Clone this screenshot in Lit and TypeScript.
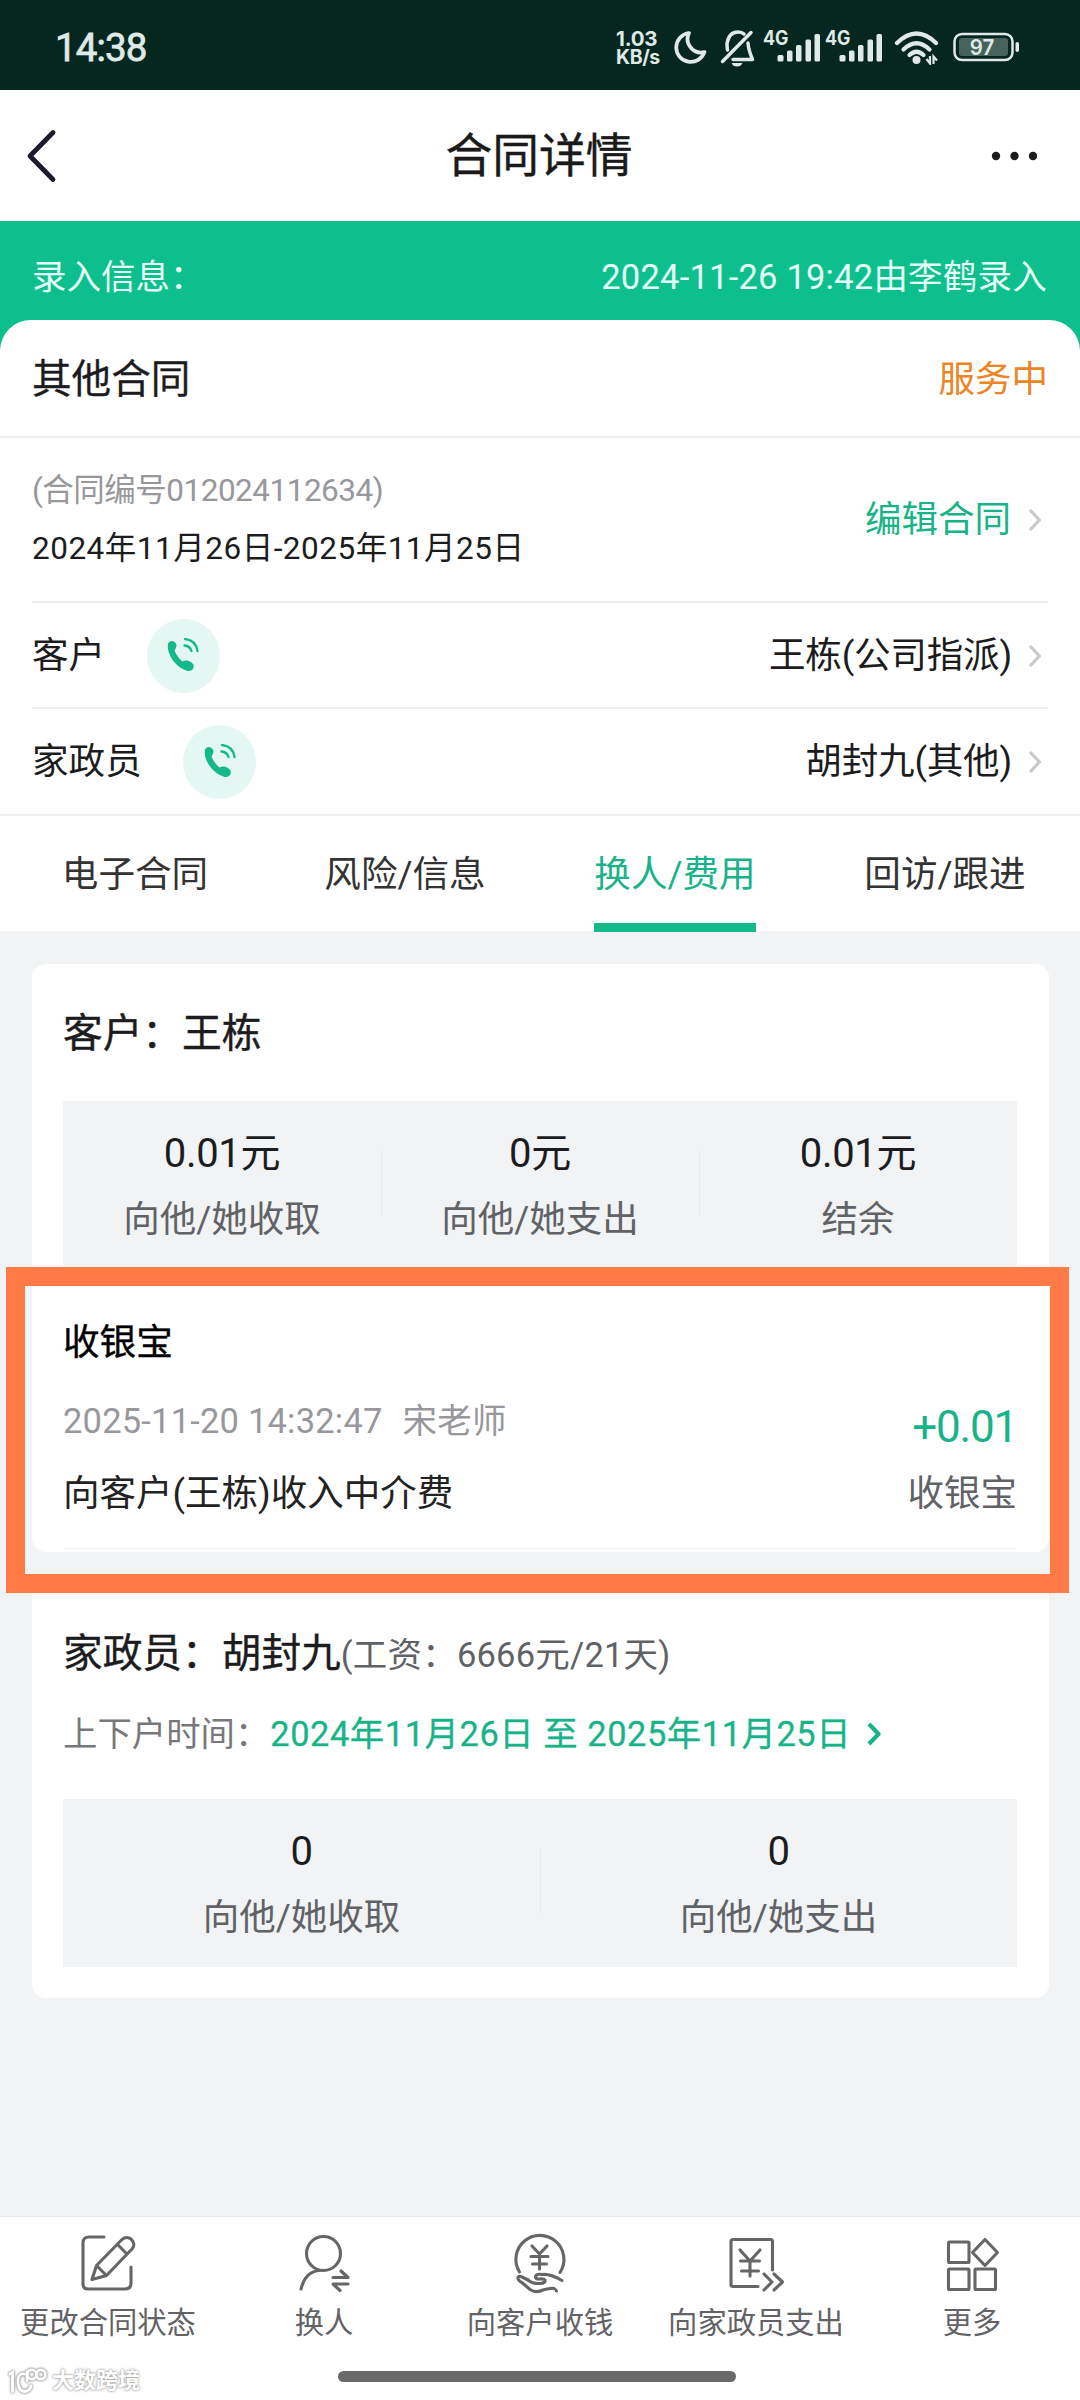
import { LitElement, html, css, svg } from "lit";
import { customElement, property } from "lit/decorators.js";

const chevronRight = html`<svg class="chev" viewBox="0 0 14 24" width="14" height="24">
  <path class="stroke" d="M2 2 L11.5 12 L2 22" fill="none" stroke="currentColor" stroke-width="3.2" stroke-linejoin="round" />
</svg>`;

const yuan = svg`<path d="M-7.5 -10 L0 -2 L7.5 -10 M0 -2 V13 M-8.5 0.5 H8.5 M-7 8 H7" />`;

const icons: Record<string, unknown> = {
  edit: svg`
    <path d="M28 7 H13 Q7 7 7 13 V54 Q7 59 12 59 H49 Q55 59 55 53 V37" />
    <path d="M16 49.500 L20.500 35.500 L46 9.500 Q51 5.500 55.500 9.500 Q60 14.500 56 19 L30.500 45.500 Z M20.500 35.500 L30.500 45.500 M42.500 15.500 L50 23" />`,
  swap: svg`
    <circle cx="31.500" cy="23.500" r="17" />
    <path d="M9 59 Q13.500 41 28 40.500" />
    <path d="M41 47.500 H56 L49 41 M56 54 H41 L48 60.500" />`,
  collect: svg`
    <path d="M11.500 42 A24 24 0 1 1 52 42.500" />
    <g transform="translate(31.500 26)">${yuan}</g>
    <path d="M20 50 L14 47 Q9.500 45 10 48.500 Q10.500 51 14.500 53 L22 59.500 Q28 63.500 35 60 Q44 57.500 46 58.500 Q48.500 60 48.500 61" />
    <path d="M20 50 Q25 54 32 53.500 Q38 53 37 50 Q36 48.500 31 49 Q27 49 27.500 46.500 Q28.500 43.500 34 44.500 Q42 43.500 54 50.500" />`,
  pay: svg`
    <path d="M48.500 40 V11.500 Q48.500 9.500 46.500 9.500 H9 Q7 9.500 7 11.500 V54.500 Q7 56.500 9 56.500 H34" />
    <path d="M16 20 L26 31 L36 20 M26 31 V46 M16.500 31 H35.500 M17.500 41 H34.500" />
    <path d="M40 44 L48 52 L40 60 M50 44 L58.500 52 L50 60" />`,
  more: svg`
    <rect x="8.500" y="12" width="20.500" height="20.500" rx="1" />
    <rect x="8.500" y="39" width="20.500" height="20.500" rx="1" />
    <rect x="35" y="39" width="20.500" height="20.500" rx="1" />
    <path d="M45 9.500 L57.500 22.500 L45 35.500 L32.500 22.500 Z" />`,
};

const signal = html`<svg class="signal" viewBox="0 -8 58 42" width="58" height="42">
  <text x="0" y="17" font-size="19.500" font-weight="700" textLength="25.5" lengthAdjust="spacingAndGlyphs" fill="currentColor">4G</text>
  <g fill="currentColor">
    <rect x="14.500" y="27" width="6" height="6.500" rx="1.500" />
    <rect x="24" y="22.500" width="5.500" height="11" rx="1.500" />
    <rect x="33" y="17" width="5.500" height="16.500" rx="1.500" />
    <rect x="42.500" y="11.500" width="5.500" height="22" rx="1.500" />
    <rect x="51.500" y="6" width="5.500" height="27.500" rx="1.500" />
  </g>
</svg>`;

@customElement("status-bar")
class StatusBar extends LitElement {
  static styles = css`
    :host { display: flex; justify-content: space-between; height: 90px; box-sizing: border-box; padding: 28px 61px 0 55px; background: #05271f; color: #dfeae6; }
    .time { font-size: 38.500px; line-height: 40px; letter-spacing: -0.900px; -webkit-text-stroke: 0.800px currentColor; }
    .right { display: flex; align-items: flex-start; font-family: Inter, "Liberation Sans", sans-serif; }
    .speed { width: 57px; padding-top: 1px; font-size: 20.500px; line-height: 19px; font-weight: 700; letter-spacing: -0.200px; }
    .speed div:last-child { font-size: 19.500px; letter-spacing: -0.400px; }
    .signal { margin: -8px 0 0 4.500px; }
    svg { display: block; }
    .moon { margin-top: 2px; }
    .bell { margin: 2px 0 0 13px; }
    .gap { margin-left: 2px; }
    .wifi { margin: 3px 0 0 11px; }
    .bat { margin: 4px 0 0 13px; }
  `;
  render() {
    return html`
      <span class="time">14:38</span>
      <div class="right">
        <div class="speed"><div>1.03</div><div>KB/s</div></div>
        <svg class="moon" viewBox="0 0 34 34" width="34" height="34">
          <path d="M16 3 A14.500 14.500 0 1 0 31.500 22 A13.500 13.500 0 0 1 16 3 Z" fill="none" stroke="currentColor" stroke-width="3.700" stroke-linejoin="round" />
        </svg>
        <svg class="bell" viewBox="0 0 36 38" width="36" height="38">
          <g fill="none" stroke="currentColor" stroke-width="3.500" stroke-linecap="round" stroke-linejoin="round">
            <path d="M2.500 31.500 L31 2.500" />
            <path d="M7.500 20 Q7 17 7 13.500 Q9 2 18 2 Q22 2 24 4" />
            <path d="M28 13 Q28.500 20 32.500 29.500 H13" />
          </g>
          <path d="M11.500 33 H22.500 Q21 36.500 17 36.500 Q13 36.500 11.500 33 Z" fill="currentColor" />
        </svg>
        <div class="gap">${signal}</div>
        <div>${signal}</div>
        <svg class="wifi" viewBox="0 0 46 34" width="46" height="34">
          <g fill="none" stroke="currentColor" stroke-width="4.200" stroke-linecap="round">
            <path d="M3 12 Q22.500 -7 42 12" />
            <path d="M9.500 18.500 Q22.500 6 35.500 18.500" />
            <path d="M15.500 24 Q22.500 17.500 29.500 24" />
          </g>
          <circle cx="22.500" cy="29" r="4" fill="currentColor" />
          <path d="M32.500 28 L36 32.500 V25 M39.500 33 V25.500 L43 29.500" fill="none" stroke="currentColor" stroke-width="2.200" />
        </svg>
        <svg class="bat" viewBox="0 0 66 30" width="66" height="30">
          <rect x="1.500" y="2" width="58" height="26" rx="7.500" fill="none" stroke="currentColor" stroke-width="2.500" />
          <rect x="6" y="6" width="49" height="18" rx="3" fill="#45635a" />
          <rect x="62.500" y="10" width="3.500" height="10" rx="1.700" fill="currentColor" />
          <text x="29" y="23" text-anchor="middle" font-size="22" font-weight="600" textLength="24.5" lengthAdjust="spacingAndGlyphs" fill="currentColor">97</text>
        </svg>
      </div>
    `;
  }
}

@customElement("call-badge")
class CallBadge extends LitElement {
  static styles = css`
    :host { display: flex; align-items: center; justify-content: center; width: 73px; height: 74px; border-radius: 50%; background: #e4f7f2; color: #14b98a; }
  `;
  render() {
    return html`<svg viewBox="0 0 36 36" width="36" height="36">
      <path d="M3 5.500 Q5 2.500 8 3.200 Q11.500 4.200 11.500 8 Q11 10.500 9.500 12.500 Q12 19 17.500 23.500 Q20 22 22.500 22.500 Q26.500 23.500 28.500 26.500 Q29.500 29.500 27.500 31.500 Q25.500 33.500 22.500 33 Q14 30.500 8 22.500 Q1.500 13 3 5.500 Z" fill="currentColor" />
      <path d="M20 1 Q31 2 32.500 13 M19.500 7.500 Q25 8 26.500 13" fill="none" stroke="currentColor" stroke-width="2.300" stroke-linecap="round" />
    </svg>`;
  }
}

@customElement("person-row")
class PersonRow extends LitElement {
  @property() role = "";
  @property() name = "";
  static styles = css`
    :host { display: flex; align-items: center; height: 106px; margin: 0 32px; padding-top: 1px; border-bottom: 2px solid #efefef; box-sizing: border-box; font-size: 36.600px; color: #1c1c1e; }
    :host([last]) { height: 105px; padding-top: 3px; border-bottom-color: transparent; }
    call-badge { margin-left: 41.500px; }
    .name { margin-left: auto; margin-right: 16px; letter-spacing: -0.200px; }
    .chev { color: #c9c9cb; margin-right: 6px; }
  `;
  render() {
    return html`<span>${this.role}</span><call-badge></call-badge><span class="name">${this.name}</span>${chevronRight}`;
  }
}

@customElement("summary-panel")
class SummaryPanel extends LitElement {
  @property({ attribute: false }) items: [string, string][] = [];
  static styles = css`
    :host { display: flex; height: 168px; background: #f1f3f5; }
    .cell { flex: 1; display: flex; flex-direction: column; align-items: center; padding-top: 28px; position: relative; }
    .cell + .cell::before { content: ""; position: absolute; left: 0; top: 50px; width: 1px; height: 64px; background: #e6e9eb; }
    .value { font-size: 40px; line-height: 50px; color: #1c1c1e; letter-spacing: -0.300px; }
    .label { font-size: 36.500px; line-height: 46px; margin-top: 18px; color: #606266; }
  `;
  render() {
    return this.items.map(
      ([value, label]) => html`<div class="cell"><div class="value">${value}</div><div class="label">${label}</div></div>`
    );
  }
}

@customElement("app-root")
export class AppRoot extends LitElement {
  static styles = css`
    :host {
      display: flex; flex-direction: column; position: relative;
      width: 1080px; height: 2400px; overflow: hidden; background: #f1f3f5; color: #1c1c1e;
      font-family: Roboto, "Noto Sans CJK SC", "Liberation Sans", sans-serif;
      line-height: 1.25; white-space: nowrap;
    }
    .header { display: flex; align-items: center; justify-content: space-between; height: 131px; box-sizing: border-box; padding: 0 43px 0 26px; background: #fff; }
    .header h1 { margin: 1px 0 0 4px; font-size: 46.800px; font-weight: 400; -webkit-text-stroke: 0.400px currentColor; color: #1a1a1a; }
    .back { width: 57px; }
    .hero { background: #0dbf8c; }
    .entry { display: flex; justify-content: space-between; align-items: center; height: 99px; box-sizing: border-box; padding: 14px 33px 0 32px; font-size: 34.500px; color: #e6fff8; }
    .by { letter-spacing: 0.220px; }
    .sheet { background: #fff; border-radius: 31px 31px 0 0; height: 611px; }
    .kind { display: flex; justify-content: space-between; align-items: center; height: 118px; box-sizing: border-box; padding: 3px 32px 0; border-bottom: 2px solid #efefef; font-size: 39.600px; }
    .kind span:first-child { -webkit-text-stroke: 0.300px currentColor; }
    .state { font-size: 36.500px; color: #ec8526; }
    .contract { display: flex; align-items: center; justify-content: space-between; height: 165px; box-sizing: border-box; margin: 0 32px; padding-top: 1px; border-bottom: 2px solid #efefef; }
    .lines { display: flex; flex-direction: column; gap: 18px; font-size: 31.500px; line-height: 40px; }
    .no { color: #97979c; letter-spacing: -0.500px; }
    .term { letter-spacing: 0.500px; }
    .edit { display: flex; align-items: center; gap: 17px; padding-right: 6px; font-size: 36.500px; color: #18b389; }
    .edit .chev { color: #c9c9cb; }
    .tabs { display: flex; height: 116px; border-top: 2px solid #efefef; }
    .tab { flex: 1; display: flex; justify-content: center; }
    .tab span { display: flex; align-items: center; box-sizing: border-box; padding: 10px 0 0; font-size: 36.600px; color: #333; border-bottom: 9px solid transparent; }
    .tab .on { color: #18b38a; border-bottom-color: #14b98a; }
    .content { flex: 1; display: flex; flex-direction: column; gap: 32px; padding: 33px 31.500px 0; }
    .card { background: #fff; border-radius: 14px; padding: 0 31.500px; box-sizing: border-box; }
    .first { height: 588px; }
    .second { height: 414px; }
    .heading { font-size: 39.700px; line-height: 50px; padding: 45px 0 42px; }
    .heading span { -webkit-text-stroke: 0.400px currentColor; }
    .heading small { font-size: 34.500px; letter-spacing: 0.200px; color: #606266; }
    .record { display: grid; grid-template-columns: 1fr auto; align-content: start; margin-top: 52px; border-bottom: 1px solid #eef0f1; height: 227px; }
    .record > * { line-height: 44px; }
    .pay { grid-column: 1 / 3; height: 76px; font-size: 36.600px; -webkit-text-stroke: 0.400px currentColor; color: #000; }
    .when { font-size: 34.500px; letter-spacing: 0.200px; color: #97979c; height: 75px; padding-top: 2px; box-sizing: border-box; }
    .when b { font-weight: 400; margin-left: 20px; }
    .amount { font-size: 44px; letter-spacing: -1.200px; color: #18b389; text-align: right; padding-top: 8px; }
    .desc { font-size: 36.500px; color: #222; }
    .via { font-size: 36.500px; color: #606266; text-align: right; }
    .second .heading { padding: 45px 0 31px; }
    .period { display: flex; align-items: center; height: 46px; margin-bottom: 42px; font-size: 34.400px; color: #77787c; }
    .range { color: #18b389; letter-spacing: 0.550px; margin-left: 1px; -webkit-text-stroke: 0.300px currentColor; }
    .period .chev { color: #18b389; margin-left: 16px; }
    .period .stroke { stroke-width: 4.200px; }
    .bottom { height: 184px; background: #fff; border-top: 1px solid #e9ebed; box-sizing: border-box; position: relative; }
    .actions { display: grid; grid-template-columns: repeat(5, 1fr); padding-top: 13px; }
    .action { display: flex; flex-direction: column; align-items: center; font-size: 29.300px; line-height: 36px; color: #636365; }
    .action svg { display: block; margin-bottom: 11px; }
    .homebar { position: absolute; left: 338px; top: 154px; width: 398px; height: 10.500px; border-radius: 6px; background: #696969; }
    .mark { position: absolute; left: 7px; top: 147px; display: flex; align-items: center; color: #fff; font-size: 22px; font-weight: 700; line-height: 34px; text-shadow: 0 0 2px #999, 0 0 3px #aaa; }
    .mark svg { display: block; margin-right: 5px; filter: drop-shadow(0 0 1px #999) drop-shadow(0 0 1px #aaa); }
    .frame { position: absolute; left: 6px; top: 1267px; width: 1063px; height: 326px; box-sizing: border-box; border: 19.500px solid #ff7a45; }
  `;

  private tabs = ["电子合同", "风险/信息", "换人/费用", "回访/跟进"];
  private actions: [string, string][] = [
    ["edit", "更改合同状态"],
    ["swap", "换人"],
    ["collect", "向客户收钱"],
    ["pay", "向家政员支出"],
    ["more", "更多"],
  ];

  render() {
    return html`
      <status-bar></status-bar>
      <div class="header">
        <svg class="back" viewBox="0 0 57 54" width="57" height="54">
          <path d="M27 3.500 L4 27 L27 50.500" fill="none" stroke="#1d1b2e" stroke-width="4.800" stroke-linecap="round" stroke-linejoin="round" />
        </svg>
        <h1>合同详情</h1>
        <svg viewBox="0 0 46 10" width="46" height="10" fill="#1c1c1e">
          <circle cx="5" cy="5" r="4.200" /><circle cx="23.500" cy="5" r="4.200" /><circle cx="42" cy="5" r="4.200" />
        </svg>
      </div>
      <div class="hero">
        <div class="entry"><span>录入信息：</span><span class="by">2024-11-26 19:42由李鹤录入</span></div>
        <div class="sheet">
          <div class="kind"><span>其他合同</span><span class="state">服务中</span></div>
          <div class="contract">
            <div class="lines">
              <span class="no">(合同编号012024112634)</span>
              <span class="term">2024年11月26日-2025年11月25日</span>
            </div>
            <div class="edit"><span>编辑合同</span>${chevronRight}</div>
          </div>
          <person-row role="客户" name="王栋(公司指派)"></person-row>
          <person-row last role="家政员" name="胡封九(其他)"></person-row>
          <div class="tabs">
            ${this.tabs.map((t, i) => html`<div class="tab"><span class=${i === 2 ? "on" : ""}>${t}</span></div>`)}
          </div>
        </div>
      </div>
      <div class="content">
        <div class="card first">
          <div class="heading"><span>客户：王栋</span></div>
          <summary-panel .items=${[["0.01元", "向他/她收取"], ["0元", "向他/她支出"], ["0.01元", "结余"]]}></summary-panel>
          <div class="record">
            <div class="pay">收银宝</div>
            <div class="when">2025-11-20 14:32:47<b>宋老师</b></div>
            <div class="amount">+0.01</div>
            <div class="desc">向客户(王栋)收入中介费</div>
            <div class="via">收银宝</div>
          </div>
        </div>
        <div class="card second">
          <div class="heading"><span>家政员：胡封九</span><small>(工资：6666元/21天)</small></div>
          <div class="period"><span>上下户时间：</span><span class="range">2024年11月26日 至 2025年11月25日</span>${chevronRight}</div>
          <summary-panel .items=${[["0", "向他/她收取"], ["0", "向他/她支出"]]}></summary-panel>
        </div>
      </div>
      <div class="bottom">
        <div class="actions">
          ${this.actions.map(
            ([icon, label]) => html`<div class="action">
              <svg viewBox="0 0 64 64" width="64" height="64" fill="none" stroke="#666" stroke-width="3.100" stroke-linecap="round" stroke-linejoin="round">${icons[icon]}</svg>
              <span>${label}</span>
            </div>`
          )}
        </div>
        <div class="homebar"></div>
        <div class="mark">
          <svg viewBox="0 0 40 30" width="40" height="30" fill="none" stroke="#fff" stroke-width="2.800" stroke-linecap="round">
            <path d="M3 8 L5.500 6.500 V25.500 M17.500 8 Q12 7 11 13 V17 Q12 25.500 18 25.500 Q22.500 25 24 20" />
            <circle cx="24.700" cy="8.500" r="4.600" /><circle cx="33.800" cy="8.500" r="4.600" /><path d="M20 6 V15" />
          </svg>
          <span>大数跨境</span>
        </div>
      </div>
      <div class="frame"></div>
    `;
  }
}
